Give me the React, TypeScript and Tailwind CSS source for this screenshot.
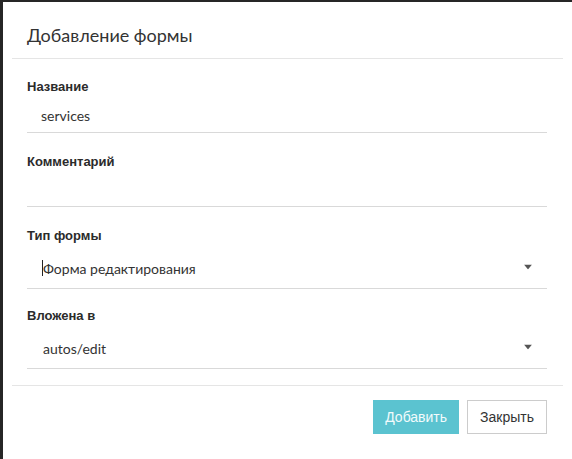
import React from 'react'

type FieldProps = { label: string; value?: string; select?: boolean; cursor?: boolean; gap: string; h: string; textPad: string }

function Field({ label, value, select, cursor, gap, h, textPad }: FieldProps) {
  return (
    <div className={gap}>
      <div className="text-[13px] leading-[18px] font-bold text-[#2b2b2b] font-['Liberation_Sans',Arial,sans-serif]">{label}</div>
      <div className={`${h} border-b border-[#d9d9d9] flex items-center pt-[3px] ${textPad} text-[14px] text-[#333] relative`}>
        {cursor && <span className="w-px h-[16px] bg-[#222] -ml-px" />}
        <span>{value}</span>
        {select && (
          <svg className="absolute right-[15px] top-1/2 -translate-y-1/2" width="8" height="5" viewBox="0 0 8 5">
            <path d="M0 0h8L4 5z" fill="#555" />
          </svg>
        )}
      </div>
    </div>
  )
}

export default function App() {
  return (
    <div className="w-[572px] h-[459px] overflow-hidden bg-[#262626] pl-[3px] pt-[2px]" style={{ fontFamily: 'Lato, "Open Sans", sans-serif' }}>
      <div className="bg-white h-full flex flex-col">
        <div className="px-6 pt-[21px] h-[56px]">
          <h1 className="text-[18px] leading-6 text-[#333]">Добавление формы</h1>
        </div>
        <div className="mx-[9px] border-t border-[#e5e5e5]" />
        <div className="pl-6 pr-[25px]">
          <Field label="Название" value="services" gap="mt-[19px]" h="h-[37px]" textPad="pl-[14px]" />
          <Field label="Комментарий" gap="mt-[20px]" h="h-[36px]" textPad="pl-[14px]" />
          <Field label="Тип формы" value="Форма редактирования" select cursor gap="mt-[20px]" h="h-[44px]" textPad="pl-[16px]" />
          <Field label="Вложена в" value="autos/edit" select gap="mt-[18px]" h="h-[44px]" textPad="pl-[16px]" />
        </div>
        <div className="mx-[9px] mt-[16px] border-t border-[#e5e5e5]" />
        <div className="pl-6 pr-[25px] pt-[14px] flex justify-end gap-2" style={{ fontFamily: '"Liberation Sans", Arial, sans-serif' }}>
          <button className="h-[34px] px-[12px] bg-[#5bc3d0] text-[#f2fbfc] text-[14px]">Добавить</button>
          <button className="h-[34px] px-[12px] border border-[#ccc] bg-white text-[#333] text-[14px]">Закрыть</button>
        </div>
      </div>
    </div>
  )
}
